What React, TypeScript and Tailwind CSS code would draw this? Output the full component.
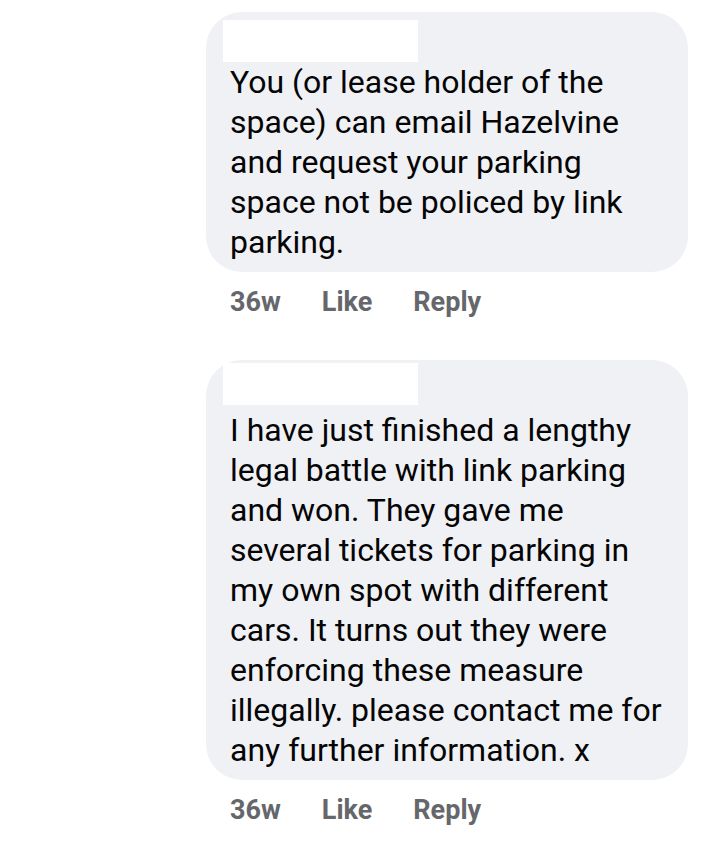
const comments = [
  {
    lines: [
      "You (or lease holder of the",
      "space) can email Hazelvine",
      "and request your parking",
      "space not be policed by link",
      "parking.",
    ],
    nameTop: "pt-2",
    textTop: "mt-0",
  },
  {
    lines: [
      "I have just finished a lengthy",
      "legal battle with link parking",
      "and won. They gave me",
      "several tickets for parking in",
      "my own spot with different",
      "cars. It turns out they were",
      "enforcing these measure",
      "illegally. please contact me for",
      "any further information. x",
    ],
    nameTop: "pt-[3px]",
    textTop: "mt-[5px]",
  },
];

interface CommentProps {
  lines: string[];
  nameTop: string;
  textTop: string;
}

const Comment = ({ lines, nameTop, textTop }: CommentProps) => (
  <div>
    <div className={`w-[482px] rounded-[36px] bg-[#f0f1f5] pl-[17px] pr-4 pb-[10px] ${nameTop}`}>
      {/* Redacted name */}
      <div className="h-[42px] w-[195px] bg-white" />
      <div className={`pl-[7px] text-[32px] leading-[40px] text-[#050505] whitespace-nowrap ${textTop}`}>
        {lines.map((line) => (
          <div key={line}>{line}</div>
        ))}
      </div>
    </div>
    <div className="flex items-center pl-6 pt-[13px] h-[46px] text-[27px] font-bold text-[#65676b] leading-[32px]">
      <span>36w</span>
      <span className="ml-[41px]">Like</span>
      <span className="ml-[41px]">Reply</span>
    </div>
  </div>
);

export default function App() {
  return (
    <div
      className="min-h-[852px] w-[719px] bg-white pl-[206px] pt-3"
      style={{ fontFamily: "Roboto, 'Liberation Sans', sans-serif" }}
    >
      <div className="flex flex-col gap-[42px]">
        {comments.map((c, i) => (
          <Comment key={i} {...c} />
        ))}
      </div>
    </div>
  );
}
